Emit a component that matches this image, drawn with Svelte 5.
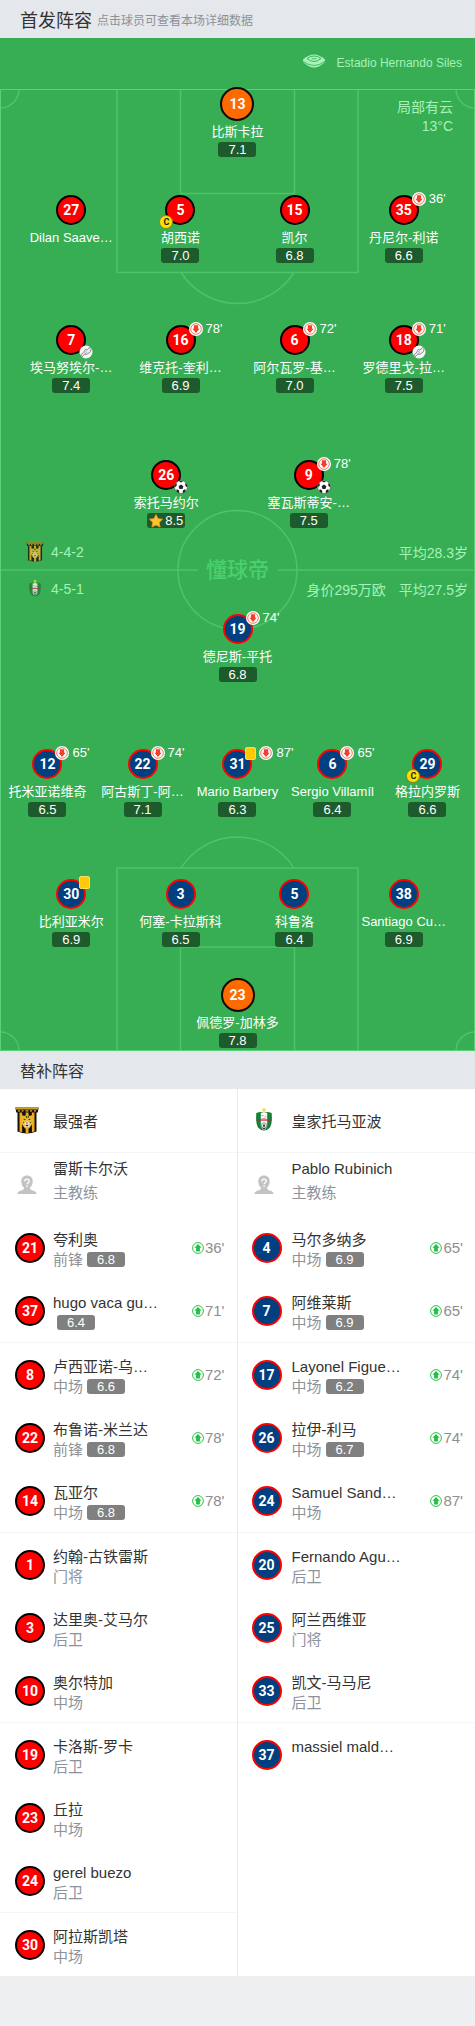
<script>
  const topRows = [
    { kind: 'one', after: 38, players: [{ n: 13, name: '比斯卡拉', score: '7.1', gk: true }] },
    {
      kind: 'four',
      after: 62,
      players: [
        { n: 27, name: 'Dilan Saave…' },
        { n: 5, name: '胡西诺', score: '7.0', captain: true },
        { n: 15, name: '凯尔', score: '6.8' },
        { n: 35, name: '丹尼尔-利诺', score: '6.6', off: "36'" }
      ]
    },
    {
      kind: 'four',
      after: 67,
      players: [
        { n: 7, name: '埃马努埃尔-…', score: '7.4', assist: true },
        { n: 16, name: '维克托-奎利…', score: '6.9', off: "78'" },
        { n: 6, name: '阿尔瓦罗-基…', score: '7.0', off: "72'" },
        { n: 18, name: '罗德里戈-拉…', score: '7.5', off: "71'", assist: true }
      ]
    },
    {
      kind: 'two',
      after: 0,
      players: [
        { n: 26, name: '索托马约尔', score: '8.5', goal: true, star: true },
        { n: 9, name: '塞瓦斯蒂安-…', score: '7.5', goal: true, off: "78'" }
      ]
    }
  ];

  const bottomRows = [
    { kind: 'one', after: 67, players: [{ n: 19, name: '德尼斯-平托', score: '6.8', off: "74'" }] },
    {
      kind: 'five',
      after: 62,
      players: [
        { n: 12, name: '托米亚诺维奇', score: '6.5', off: "65'" },
        { n: 22, name: '阿古斯丁-阿…', score: '7.1', off: "74'" },
        { n: 31, name: 'Mario Barbery', score: '6.3', card: true, off: "87'" },
        { n: 6, name: 'Sergio Villamíl', score: '6.4', off: "65'" },
        { n: 29, name: '格拉内罗斯', score: '6.6', captain: true }
      ]
    },
    {
      kind: 'four',
      after: 31,
      players: [
        { n: 30, name: '比利亚米尔', score: '6.9', card: true },
        { n: 3, name: '何塞-卡拉斯科', score: '6.5' },
        { n: 5, name: '科鲁洛', score: '6.4' },
        { n: 38, name: 'Santiago Cu…', score: '6.9' }
      ]
    },
    { kind: 'one', after: 0, players: [{ n: 23, name: '佩德罗-加林多', score: '7.8', gk: true }] }
  ];

  const benches = [
    {
      side: 'red',
      team: '最强者',
      coach: '雷斯卡尔沃',
      players: [
        { n: 21, name: '夸利奥', role: '前锋', score: '6.8', on: "36'" },
        { n: 37, name: 'hugo vaca gu…', role: '', score: '6.4', on: "71'" },
        { n: 8, name: '卢西亚诺-乌…', role: '中场', score: '6.6', on: "72'" },
        { n: 22, name: '布鲁诺-米兰达', role: '前锋', score: '6.8', on: "78'" },
        { n: 14, name: '瓦亚尔', role: '中场', score: '6.8', on: "78'" },
        { n: 1, name: '约翰-古铁雷斯', role: '门将' },
        { n: 3, name: '达里奥-艾马尔', role: '后卫' },
        { n: 10, name: '奥尔特加', role: '中场' },
        { n: 19, name: '卡洛斯-罗卡', role: '后卫' },
        { n: 23, name: '丘拉', role: '中场' },
        { n: 24, name: 'gerel buezo', role: '后卫' },
        { n: 30, name: '阿拉斯凯塔', role: '中场' }
      ]
    },
    {
      side: 'blue',
      team: '皇家托马亚波',
      coach: 'Pablo Rubinich',
      players: [
        { n: 4, name: '马尔多纳多', role: '中场', score: '6.9', on: "65'" },
        { n: 7, name: '阿维莱斯', role: '中场', score: '6.9', on: "65'" },
        { n: 17, name: 'Layonel Figue…', role: '中场', score: '6.2', on: "74'" },
        { n: 26, name: '拉伊-利马', role: '中场', score: '6.7', on: "74'" },
        { n: 24, name: 'Samuel Sand…', role: '中场', on: "87'" },
        { n: 20, name: 'Fernando Agu…', role: '后卫' },
        { n: 25, name: '阿兰西维亚', role: '门将' },
        { n: 33, name: '凯文-马马尼', role: '后卫' },
        { n: 37, name: 'massiel mald…', role: '' }
      ]
    }
  ];
</script>

{#snippet crest(side)}
  {#if side === 'red'}
    <svg class="crest" viewBox="0 0 24 27" aria-hidden="true">
      <path d="M.3.5h23.4l-1 5H1.3z" fill="#17120a" />
      <path d="M.5.5h23l-.5 2H1z" fill="#c9a227" />
      <path d="M3 3.200h2v1.400H3zm3.500 0h2v1.400h-2zm4 0h3v1.400h-3zm4.500 0h2v1.400h-2zm4 0h2v1.400h-2z" fill="#e0b62c" />
      <path d="M2.500 5h19v19.500Q12 28.500 2.500 24.500z" fill="#14110c" />
      <path d="M4.500 5.500h2.600v19.800l-2.600-.8zm6.200 0h2.800v21h-2.800zm6.200 0h2.600v19l-2.600.8z" fill="#f2a81d" />
      <path d="M7 8l2 1q3-1.300 6 0l2-1 .6 3 1 3-2 4-2.600 3.500h-4L7.400 18l-2-4 1-3z" fill="#eab830" />
      <path d="M8.500 11.500l2.500 1.500H9zm7 0L13 13h2zM8 15l1.500 1H8zm8 0l-1.500 1H16zM11 9h.8v2H11zm1.800 0h.8v2h-.8z" fill="#20180a" />
      <path d="M9.500 16l2.500-2 2.500 2-.5 4h-4z" fill="#f6efdc" />
      <path d="M11 15.500h2l-1 1.400zm-.6 2.300h3.200l-.6 1.500h-2z" fill="#5b2316" />
    </svg>
  {:else}
    <svg class="crest" viewBox="0 0 24 27" aria-hidden="true">
      <path d="M12 .4l.8 1.700 1.800.2-1.300 1.200.3 1.800-1.600-.9-1.600.9.3-1.800-1.300-1.200 1.800-.2z" fill="#f6e12a" />
      <path d="M4.300 6q4-1.500 7.700-.6 3.700-.9 7.700.6.8 10-1.700 14.500-2 2.500-6 3-4-.5-6-3Q3.500 16 4.300 6z" fill="#15803a" />
      <path d="M8.800 6Q12 4.500 15.200 6v13q-1 3-3.200 4-2.200-1-3.200-4z" fill="#fbf7f5" />
      <path d="M4.500 12.400h15v1.200h-15z" fill="#b22a38" />
      <path d="M9.500 8h1.800v1H9.500zm3 1.500h2v.8h-2zM9.800 11h4v.7h-4z" fill="#d7899a" />
      <circle cx="12" cy="18.500" r="2.600" fill="#fff" stroke="#444" stroke-width=".6" />
      <path d="M12 17.200l1.300 1-.5 1.500h-1.600l-.5-1.500zM10.800 21h2.400v1.200h-2.400z" fill="#333" />
    </svg>
  {/if}
{/snippet}

{#snippet pitchPlayer(p, side)}
  <button type="button" class="player">
    <span class="disc {p.gk ? 'keeper' : side}">
      <span class="num">{p.n}</span>
      {#if p.card || p.off}
        <span class="events">
          {#if p.card}<i class="card"></i>{/if}
          {#if p.off}
            <svg class="swap" viewBox="0 0 14 14" aria-hidden="true">
              <circle cx="7" cy="7" r="7" fill="#fff" />
              <circle cx="7" cy="7" r="5.300" fill="none" stroke="#ee6a55" stroke-width=".9" />
              <path d="M4.900 3.200h4.200v3.500h1.500L7 11 3.400 6.700h1.500z" fill="#f2402b" />
            </svg>
            <span class="minute">{p.off}</span>
          {/if}
        </span>
      {/if}
      {#if p.captain}<span class="captain">C</span>{/if}
      {#if p.goal}
        <svg class="feat" viewBox="0 0 14 14" aria-hidden="true">
          <circle cx="7" cy="7" r="6.500" fill="#fff" stroke="#555" stroke-width=".6" />
          <path d="M7 4.600l2.400 1.700-.9 2.800h-3l-.9-2.800zM4.800.9h4.400L7 2.400zM.6 5.500l1.700-2.700.6 2.500-1.700 2zM13.400 5.500l-1.700-2.700-.6 2.500 1.700 2zM2.300 11.400l.4-2.300 2.400 1.500.2 2.600zM11.700 11.400l-.4-2.300-2.400 1.500-.2 2.600z" fill="#222" />
        </svg>
      {/if}
      {#if p.assist}
        <svg class="feat" viewBox="0 0 14 14" aria-hidden="true">
          <circle cx="7" cy="7" r="6.500" fill="#f7f7f7" />
          <path d="M1.800 9.800Q5 8.500 6.300 4.300L8 5l2.700-2.800 1.400 1.300-.6 3.200-3 2.300-2.900.5-2.600 2.300z" fill="#ececec" stroke="#777" stroke-width=".8" />
          <path d="M6.600 6.600l1.600 1M5.600 8l1.600 1" stroke="#888" stroke-width=".7" />
        </svg>
      {/if}
    </span>
    <span class="pname">{p.name}</span>
    {#if p.score}
      <span class="score">
        {#if p.star}
          <svg class="star" viewBox="0 0 14 14" aria-hidden="true">
            <path d="M7 .6l2 4.100 4.500.5-3.300 3.200.9 4.700L7 10.900l-4.100 2.200.9-4.700L.5 5.200 5 4.700z" fill="#ffc52e" stroke="#f59a1c" stroke-width=".9" stroke-linejoin="round" />
          </svg>
        {/if}
        {p.score}
      </span>
    {/if}
  </button>
{/snippet}

{#snippet rows(list, side)}
  {#each list as row}
    <div class="line {row.kind}" style="margin-bottom: {row.after}px">
      {#each row.players as p}
        {@render pitchPlayer(p, side)}
      {/each}
    </div>
  {/each}
{/snippet}

<main>
  <header class="bar">
    <h2 class="main-title">首发阵容</h2>
    <small>点击球员可查看本场详细数据</small>
  </header>

  <section class="pitch">
    <svg class="marks" viewBox="0 0 475 962" preserveAspectRatio="none" aria-hidden="true">
      <g fill="none" stroke="#4cc46a" stroke-width="1.500">
        <path d="M117 0v183.500h241V0M180.500 0v104.500h114V0M181 183.500a67 67 0 0 0 113 0" />
        <path d="M117 962V779h241v183M180.500 962V858h114v104M181 779a67 67 0 0 1 113 0" />
        <path d="M0 19A19 19 0 0 0 19 0M456 0a19 19 0 0 0 19 19M0 943a19 19 0 0 1 19 19M456 962a19 19 0 0 1 19-19" />
        <path d="M0 481h198M278 481h197" />
        <circle cx="237.500" cy="481" r="59.500" />
      </g>
      <path d="M.5.5h474v961H.5z" fill="none" stroke="#5ad07a" />
    </svg>
    <div class="watermark">懂球帝</div>

    <div class="stadium">
      <svg viewBox="0 0 24 14" aria-hidden="true">
        <path d="M12 .5Q17 .5 23 5.500v2.500Q17 13.500 12 13.500T1 8V5.500Q7 .5 12 .5z" fill="#a5f3b8" />
        <path d="M12 2q4 0 7 2.600-3.500 2.900-7 2.900T5 4.600Q8 2 12 2z" fill="none" stroke="#37ae54" stroke-width=".9" />
        <path d="M9.500 4.700h5M1 7.300q5.500 4.200 11 4.200t11-4.200" fill="none" stroke="#37ae54" stroke-width=".8" />
      </svg>
      <span>Estadio Hernando Siles</span>
    </div>
    <p class="weather">局部有云<br />13°C</p>

    {@render rows(topRows, 'red')}

    <div class="summary">
      <div class="info">
        {@render crest('red')}
        <span class="shape">4-4-2</span>
        <span>平均28.3岁</span>
      </div>
      <div class="info">
        {@render crest('blue')}
        <span class="shape">4-5-1</span>
        <span>身价295万欧</span>
        <span>平均27.5岁</span>
      </div>
    </div>

    {@render rows(bottomRows, 'blue')}
  </section>

  <header class="bar">
    <h2>替补阵容</h2>
  </header>

  <section class="benches">
    {#each benches as b}
      <ul>
        <li class="team">
          <span class="pic">{@render crest(b.side)}</span>
          <span class="bname">{b.team}</span>
        </li>
        <li class="coach">
          <span class="pic">
            <svg class="avatar" viewBox="0 0 20 20" aria-hidden="true">
              <path d="M10 .5c3.600 0 5.700 2.300 5.700 5.700 0 2.700-1 5-2.700 6.400.1 2 .7 2.400 2.700 3 2.500.7 3.600 1.500 4 3.400H.3c.4-1.900 1.500-2.700 4-3.400 2-.6 2.600-1 2.700-3-1.700-1.400-2.700-3.700-2.700-6.400C4.300 2.800 6.400.5 10 .5z" fill="#c3c3c3" />
              <path d="M7.800 6.300q0-2.200 2.200-2.200t2.200 1.900q0 1.100-1.100 1.800-1 .6-1 1.500M10.100 10.600v1.500" fill="none" stroke="#fff" stroke-width="1.400" />
            </svg>
          </span>
          <span class="who">
            <span class="bname">{b.coach}</span>
            <span class="role">主教练</span>
          </span>
        </li>
        {#each b.players as p}
          <li>
            <span class="disc {b.side}"><span class="num">{p.n}</span></span>
            <span class="who">
              <a class="bname" href="#player-{b.side}-{p.n}">{p.name}</a>
              <span class="role">
                <span>{p.role}</span>
                {#if p.score}<span class="score">{p.score}</span>{/if}
              </span>
            </span>
            {#if p.on}
              <span class="on">
                <svg viewBox="0 0 12 12" aria-hidden="true">
                  <circle cx="6" cy="6" r="5.400" fill="#fff" stroke="#2cc24e" stroke-width="1" />
                  <path d="M6 2l3.600 3.800H7.900v3.700H4.100V5.800H2.400z" fill="#22c144" />
                </svg>
                {p.on}
              </span>
            {/if}
          </li>
        {/each}
      </ul>
    {/each}
  </section>
</main>

<style>
  :global(body) {
    background: #eeeff1;
  }
  main {
    font-family: 'Liberation Sans', 'Noto Sans CJK SC', sans-serif;
    color: #333;
  }
  .bar {
    display: flex;
    align-items: center;
    gap: 5px;
    height: 38px;
    padding: 0 20px;
    background: #e4e7ec;
  }
  h2 {
    margin: 0;
    font-size: 16px;
    font-weight: 400;
  }
  .main-title {
    font-size: 18px;
  }
  small {
    font-size: 12px;
    color: #8d9095;
  }

  .pitch {
    position: relative;
    padding-bottom: 3px;
    background: #37ae54;
    color: #a5f3b8;
  }
  .marks {
    position: absolute;
    top: 51px;
    left: 0;
    width: 100%;
    height: calc(100% - 51px);
  }
  .watermark {
    position: absolute;
    top: 517px;
    left: 0;
    width: 100%;
    text-align: center;
    font-size: 21px;
    line-height: 30px;
    font-weight: 500;
    color: #4bd06e;
  }
  .stadium {
    display: flex;
    justify-content: flex-end;
    align-items: center;
    gap: 11px;
    height: 49px;
    padding: 0 13px;
    font-size: 12px;
  }
  .stadium svg {
    width: 24px;
    height: 14px;
    margin-bottom: 4px;
  }
  .weather {
    position: absolute;
    top: 60px;
    right: 22px;
    margin: 0;
    font-size: 14px;
    line-height: 19px;
    text-align: right;
  }
  .line {
    position: relative;
    display: grid;
    justify-items: center;
  }
  .two {
    grid-template-columns: 30% 30%;
    justify-content: center;
  }
  .four {
    grid-template-columns: 22% 24% 24% 22%;
    justify-content: center;
  }
  .five {
    grid-template-columns: repeat(5, 20%);
  }
  .player {
    display: flex;
    flex-direction: column;
    align-items: center;
    justify-content: flex-start;
    padding: 0;
    border: 0;
    background: none;
    color: #fff;
    font: inherit;
    cursor: pointer;
  }
  .disc {
    position: relative;
    display: flex;
    align-items: center;
    justify-content: center;
    flex: none;
    box-sizing: border-box;
    width: 30px;
    height: 30px;
    border: 2px solid #000;
    border-radius: 50%;
    background: #f00;
    color: #fff;
    font-family: Roboto, sans-serif;
    font-size: 14px;
    font-weight: 700;
  }
  .disc.blue {
    border-color: #f00;
    background: #003f80;
  }
  .disc.keeper {
    width: 34px;
    height: 34px;
    border-color: #120a04;
    background: #ff6a00;
  }
  .events {
    position: absolute;
    top: -5px;
    left: 21px;
    display: flex;
    align-items: center;
    gap: 3px;
    font-family: 'Liberation Sans', sans-serif;
    font-size: 13px;
    font-weight: 400;
    line-height: 14px;
  }
  .card {
    box-sizing: border-box;
    width: 11px;
    height: 13px;
    border: 1px solid #f6dd6a;
    border-radius: 2px;
    background: #ffc907;
  }
  .swap {
    width: 14px;
    height: 14px;
  }
  .captain,
  .feat {
    position: absolute;
    top: 18px;
    width: 14px;
    height: 14px;
  }
  .feat {
    left: 21px;
  }
  .captain {
    left: -8px;
    box-sizing: border-box;
    border: 1px solid #8b8420;
    border-radius: 50%;
    background: #ffe000;
    color: #222;
    font-size: 9px;
    line-height: 12px;
    text-align: center;
  }
  .pname {
    margin-top: 3px;
    font-size: 13px;
    line-height: 20px;
    white-space: nowrap;
  }
  .keeper + .pname {
    margin-top: 1px;
  }
  .score {
    display: flex;
    align-items: center;
    justify-content: center;
    width: 38px;
    height: 15px;
    border-radius: 3px;
    background: #1d5a2c;
    color: #fff;
    font-size: 13px;
    line-height: 15px;
  }
  .star {
    width: 14px;
    height: 14px;
    margin-right: 2px;
  }
  .summary {
    position: relative;
    padding: 5px 7px 7px 26px;
    font-size: 14px;
  }
  .info {
    display: flex;
    align-items: center;
    gap: 13px;
    height: 37px;
  }
  .info .crest {
    width: 18px;
    height: 20px;
    opacity: 0.8;
  }
  .shape {
    flex: 1;
    margin-left: -6px;
  }

  .benches {
    display: grid;
    grid-template-columns: 1fr 1fr;
    background: #fff;
  }
  ul {
    margin: 0;
    padding: 0;
    list-style: none;
  }
  ul:first-child {
    border-right: 1px solid #e9eaec;
  }
  li {
    display: flex;
    align-items: center;
    gap: 8px;
    height: 63px;
    padding: 0 12px 0 15px;
    font-size: 15px;
  }
  li:nth-child(3n + 1):not(:last-child) {
    border-bottom: 1px solid #f4f5f6;
  }
  ul + ul li {
    gap: 10px;
    padding-left: 14px;
  }
  .pic {
    display: flex;
    width: 30px;
  }
  .team .crest {
    width: 24px;
    height: 27px;
  }
  .avatar {
    width: 20px;
    height: 20px;
    margin-left: 2px;
  }
  .who {
    flex: 1;
    display: flex;
    flex-direction: column;
    padding-top: 4px;
    line-height: 20px;
  }
  .coach .who {
    padding: 0 0 8px;
    line-height: 24px;
  }
  .bname {
    color: #333;
    text-decoration: none;
    white-space: nowrap;
  }
  .role {
    display: flex;
    align-items: center;
    gap: 4px;
    min-height: 20px;
    color: #8d939b;
  }
  .role .score {
    background: #808080;
  }
  .on {
    display: flex;
    align-items: center;
    gap: 1px;
    color: #8e8e8e;
  }
  .on svg {
    width: 12px;
    height: 12px;
  }
</style>
